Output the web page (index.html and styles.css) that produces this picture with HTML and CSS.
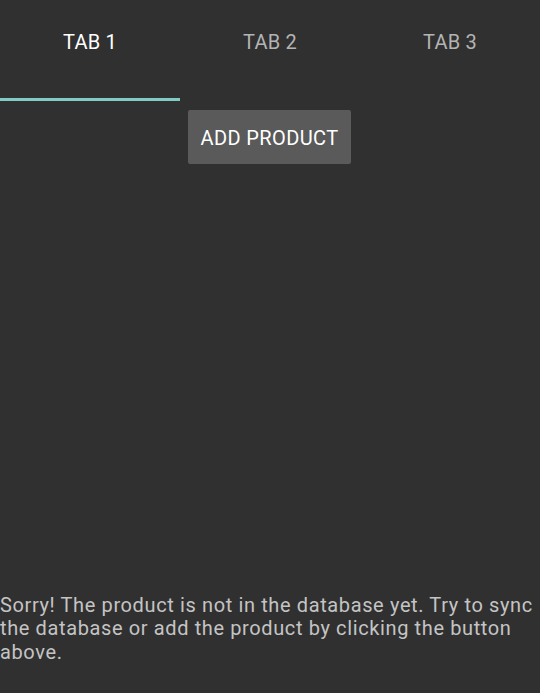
FILE: index.html
```html
<!DOCTYPE html>
<html>
<head>
<meta charset="utf-8">
<link rel="stylesheet" href="styles.css">
</head>
<body>
<div class="app">
  <div class="tabs">
    <div class="tab active">TAB 1</div>
    <div class="tab">TAB 2</div>
    <div class="tab">TAB 3</div>
  </div>
  <div class="content">
    <button class="add-btn">ADD PRODUCT</button>
    <p class="message">Sorry! The product is not in the database yet. Try to sync the database or add the product by clicking the button above.</p>
  </div>
</div>
</body>
</html>
```
FILE: styles.css
```css
html, body {
  margin: 0;
  padding: 0;
  background: #303030;
}
.app {
  width: 540px;
  height: 693px;
  display: flex;
  flex-direction: column;
  font-family: Roboto, "Liberation Sans", sans-serif;
}
.tabs {
  display: grid;
  grid-template-columns: repeat(3, 1fr);
  height: 101px;
}
.tab {
  color: #b4b4b4;
  font-size: 20px;
  letter-spacing: 0.2px;
  text-align: center;
  padding-top: 30px;
  box-sizing: border-box;
  line-height: 24px;
}
.tab.active {
  color: #ffffff;
  border-bottom: 3px solid #80cbc4;
}
.content {
  flex: 1;
  display: flex;
  flex-direction: column;
  align-items: center;
  padding-top: 9px;
}
.add-btn {
  background: #5a5a5a;
  color: #ffffff;
  border: none;
  border-radius: 2px;
  font-family: Roboto, "Liberation Sans", sans-serif;
  font-size: 20px;
  letter-spacing: 0.4px;
  line-height: 24px;
  padding: 2px 0 0 0;
  height: 54px;
  width: 163px;
  margin-left: -1px;
}
.message {
  margin: auto 0 0 0;
  align-self: stretch;
  color: #c4c4c4;
  font-size: 20px;
  letter-spacing: 0.62px;
  line-height: 23.5px;
  padding: 0 0 29px 0;
}
```
